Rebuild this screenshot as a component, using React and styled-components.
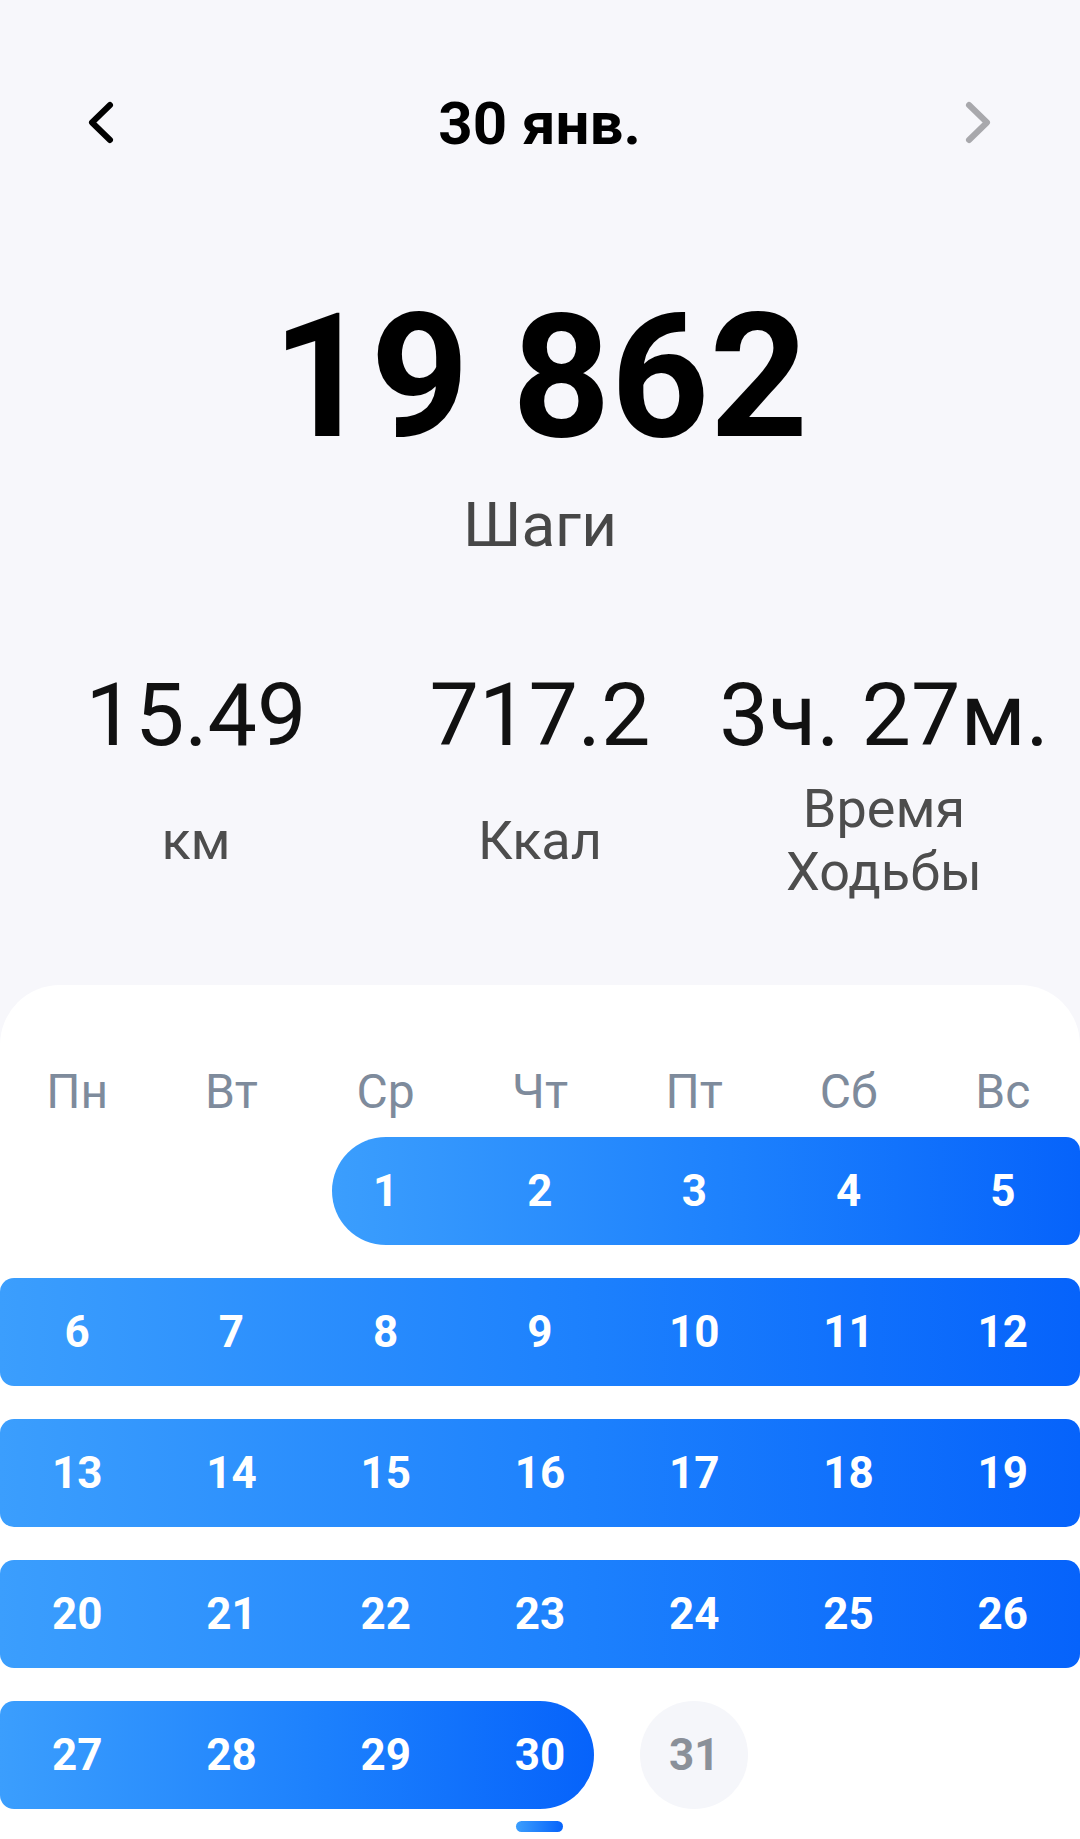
import React from 'react';
import styled, {createGlobalStyle} from 'styled-components';

const GlobalStyle = createGlobalStyle`
  html, body {
    margin: 0;
    padding: 0;
    background: #F7F7FB;
  }
  body {
    font-family: Roboto, "Noto Sans", "Liberation Sans", sans-serif;
  }
`;

const Page = styled.div`
  display: flex;
  flex-direction: column;
  width: 1080px;
  min-height: 1839px;
  background: #F7F7FB;
`;

const Header = styled.div`
  display: grid;
  grid-template-columns: 1fr auto 1fr;
  align-items: center;
  height: 60px;
  padding: 94px 88px 0 87px;
`;

const NavButton = styled.button`
  display: flex;
  align-items: center;
  justify-self: ${({$side}) => ($side === 'right' ? 'end' : 'start')};
  padding: 0;
  border: 0;
  background: none;
  color: ${({$disabled}) => ($disabled ? '#A8A8AC' : '#000000')};
`;

const Title = styled.div`
  font-size: 60px;
  line-height: 60px;
  font-weight: 700;
  color: #000000;
`;

const Steps = styled.div`
  margin-top: 137px;
  text-align: center;
  font-size: 172px;
  line-height: 172px;
  font-weight: 700;
  color: #000000;
`;

const StepsLabel = styled.div`
  margin-top: 31px;
  text-align: center;
  font-size: 62px;
  line-height: 62px;
  color: #474747;
`;

const Stats = styled.div`
  display: grid;
  grid-template-columns: repeat(3, 1fr);
  padding: 0 24px;
  margin-top: 115px;
`;

const Stat = styled.div`
  display: flex;
  flex-direction: column;
  align-items: center;
`;

const StatValue = styled.div`
  font-size: 88px;
  line-height: 88px;
  color: #111111;
  white-space: nowrap;
`;

const StatLabel = styled.div`
  display: flex;
  align-items: center;
  justify-content: center;
  height: 126px;
  margin-top: 18px;
  text-align: center;
  font-size: 54px;
  line-height: 63px;
  color: #4D4D4D;
`;

const Card = styled.div`
  flex: 1;
  margin-top: 82px;
  padding-top: 83px;
  background: #FFFFFF;
  border-radius: 60px 60px 0 0;
`;

const WeekDays = styled.div`
  display: grid;
  grid-template-columns: repeat(7, 1fr);
`;

const WeekDay = styled.div`
  text-align: center;
  font-size: 48px;
  line-height: 48px;
  color: #7E8B9C;
`;

const Weeks = styled.div`
  display: flex;
  flex-direction: column;
  gap: 33px;
  margin-top: 21px;
`;

const Week = styled.div`
  display: grid;
  grid-template-columns: repeat(7, 1fr);
  grid-template-rows: 108px;
`;

const Range = styled.div`
  grid-row: 1;
  grid-column: ${({$from, $to}) => `${$from} / ${$to + 1}`};
  margin-left: ${({$roundStart}) => ($roundStart ? 'calc((100% / var(--span) - 108px) / 2)' : '0')};
  margin-right: ${({$roundEnd}) => ($roundEnd ? 'calc((100% / var(--span) - 108px) / 2)' : '0')};
  border-radius: ${({$roundStart, $roundEnd}) =>
    `${$roundStart ? 54 : 14}px ${$roundEnd ? 54 : 14}px ${$roundEnd ? 54 : 14}px ${$roundStart ? 54 : 14}px`};
  background: linear-gradient(90deg, #3B9EFD 0%, #1C80FD 55%, #0663FB 100%);
`;

const Day = styled.div`
  position: relative;
  grid-row: 1;
  grid-column: ${({$col}) => $col};
  display: flex;
  align-items: center;
  justify-content: center;
  font-size: 44px;
  font-weight: 700;
  color: ${({$active}) => ($active ? '#FFFFFF' : '#8A9099')};

  ${({$active}) => !$active && `
    &::before {
      content: '';
      position: absolute;
      width: 108px;
      height: 108px;
      border-radius: 50%;
      background: #F5F6FA;
      z-index: 0;
    }
  `}

  ${({$today}) => $today && `
    &::after {
      content: '';
      position: absolute;
      bottom: -23px;
      left: 50%;
      width: 47px;
      height: 11px;
      margin-left: -24px;
      border-radius: 6px;
      background: linear-gradient(90deg, #3B9EFD, #0663FB);
    }
  `}
`;

const DayNum = styled.span`
  position: relative;
  z-index: 1;
`;

const Chevron = ({dir}) => (
    <svg width="28" height="48" viewBox="0 0 28 48">
        <path
            d={dir === 'left' ? 'M23 5 L5 22.5 L23 40' : 'M5 5 L23 22.5 L5 40'}
            fill="none"
            stroke="currentColor"
            strokeWidth="6"
            strokeLinecap="round"
            strokeLinejoin="round"
        />
    </svg>
);

const weeks = [
    {start: 3, days: [1, 2, 3, 4, 5]},
    {start: 1, days: [6, 7, 8, 9, 10, 11, 12]},
    {start: 1, days: [13, 14, 15, 16, 17, 18, 19]},
    {start: 1, days: [20, 21, 22, 23, 24, 25, 26]},
    {start: 1, days: [27, 28, 29, 30, 31]},
];

const firstDay = 1;
const today = 30;

const App = () =>
{
    return (
        <Page>
            <GlobalStyle/>
            <Header>
                <NavButton $side="left"><Chevron dir="left"/></NavButton>
                <Title>30 янв.</Title>
                <NavButton $side="right" $disabled><Chevron dir="right"/></NavButton>
            </Header>

            <Steps>19 862</Steps>
            <StepsLabel>Шаги</StepsLabel>

            <Stats>
                <Stat>
                    <StatValue>15.49</StatValue>
                    <StatLabel>км</StatLabel>
                </Stat>
                <Stat>
                    <StatValue>717.2</StatValue>
                    <StatLabel>Ккал</StatLabel>
                </Stat>
                <Stat>
                    <StatValue>3ч. 27м.</StatValue>
                    <StatLabel>Время<br/>Ходьбы</StatLabel>
                </Stat>
            </Stats>

            <Card>
                <WeekDays>
                    {['Пн', 'Вт', 'Ср', 'Чт', 'Пт', 'Сб', 'Вс'].map(d => (
                        <WeekDay key={d}>{d}</WeekDay>
                    ))}
                </WeekDays>
                <Weeks>
                    {weeks.map(week => {
                        const active = week.days.filter(d => d >= firstDay && d <= today);
                        const from = week.start + week.days.indexOf(active[0]);
                        const to = from + active.length - 1;
                        return (
                            <Week key={week.days[0]}>
                                <Range
                                    $from={from}
                                    $to={to}
                                    $roundStart={active[0] === firstDay}
                                    $roundEnd={active[active.length - 1] === today}
                                    style={{'--span': to - from + 1}}
                                />
                                {week.days.map((d, i) => (
                                    <Day
                                        key={d}
                                        $col={week.start + i}
                                        $active={d <= today}
                                        $today={d === today}
                                    >
                                        <DayNum>{d}</DayNum>
                                    </Day>
                                ))}
                            </Week>
                        );
                    })}
                </Weeks>
            </Card>
        </Page>
    );
};

export default App;
